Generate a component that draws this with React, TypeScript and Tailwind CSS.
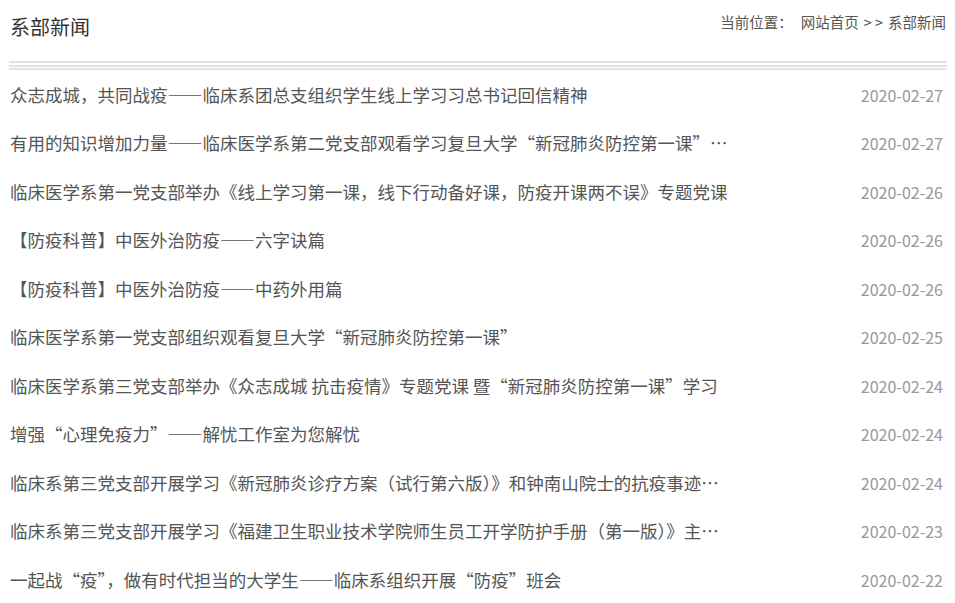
const news = [
  { title: "众志成城，共同战疫——临床系团总支组织学生线上学习习总书记回信精神", date: "2020-02-27" },
  { title: "有用的知识增加力量——临床医学系第二党支部观看学习复旦大学“新冠肺炎防控第一课”学习心得分享", date: "2020-02-27" },
  { title: "临床医学系第一党支部举办《线上学习第一课，线下行动备好课，防疫开课两不误》专题党课", date: "2020-02-26" },
  { title: "【防疫科普】中医外治防疫——六字诀篇", date: "2020-02-26" },
  { title: "【防疫科普】中医外治防疫——中药外用篇", date: "2020-02-26" },
  { title: "临床医学系第一党支部组织观看复旦大学“新冠肺炎防控第一课”", date: "2020-02-25" },
  { title: "临床医学系第三党支部举办《众志成城 抗击疫情》专题党课 暨“新冠肺炎防控第一课”学习", date: "2020-02-24" },
  { title: "增强“心理免疫力”——解忧工作室为您解忧", date: "2020-02-24" },
  { title: "临床系第三党支部开展学习《新冠肺炎诊疗方案（试行第六版）》和钟南山院士的抗疫事迹学习活动", date: "2020-02-24" },
  { title: "临床系第三党支部开展学习《福建卫生职业技术学院师生员工开学防护手册（第一版）》主题学习", date: "2020-02-23" },
  { title: "一起战“疫”，做有时代担当的大学生——临床系组织开展“防疫”班会", date: "2020-02-22" },
];

export default function App() {
  return (
    <div
      lang="zh-CN"
      className="w-[955px] h-[603px] overflow-hidden bg-white px-[9px]"
      style={{ fontFamily: '"Noto Sans CJK SC", "Liberation Sans", sans-serif' }}
    >
      {/* Header */}
      <div className="flex h-[61px] justify-between">
        <h2 className="pl-px pt-[14px] text-[20px] leading-[26px] font-normal text-[#333]">系部新闻</h2>
        <div className="pt-[12px] text-[14.5px] leading-[20px] text-[#555]">
          当前位置：
          <a className="ml-[8px] text-[#555]">网站首页</a>
          <span className="mx-[5px]">&gt; &gt;</span>
          <a className="text-[#555]">系部新闻</a>
        </div>
      </div>

      {/* Divider */}
      <div className="w-[938px]">
        <div className="h-[2px] bg-[#e2e2e2]" />
        <div className="mt-[1.5px] h-[2px] bg-[#e2e2e2]" />
        <div className="mt-[1.5px] h-[2px] bg-[#e2e2e2]" />
      </div>

      {/* List */}
      <ul className="mt-[0.5px] w-[938px]">
        {news.map((n, i) => (
          <li key={i} className="flex h-[48.5px] items-center justify-between">
            <a className="w-[722px] truncate pl-px text-[17.5px] leading-[24px] text-[#555]">{n.title}</a>
            <span className="pr-[4px] text-[16px] leading-[20px] text-[#999]">{n.date}</span>
          </li>
        ))}
      </ul>
    </div>
  );
}
